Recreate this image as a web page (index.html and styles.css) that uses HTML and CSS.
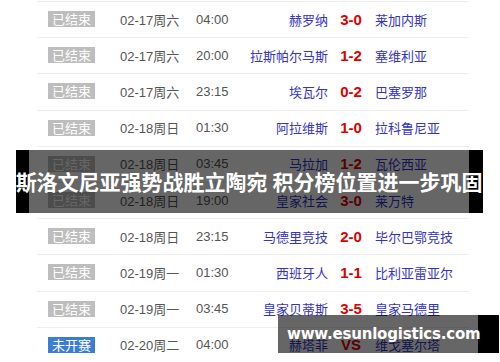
FILE: index.html
```html
<!DOCTYPE html>
<html lang="zh-CN">
<head>
<meta charset="utf-8">
<title>斯洛文尼亚强势战胜立陶宛 积分榜位置进一步巩固</title>
<link rel="stylesheet" href="styles.css">
</head>
<body>
<div class="page">
  <div class="list">
    <div class="row"><span class="badge">已结束</span><span class="date">02-17周六</span><span class="time">04:00</span><span class="home">赫罗纳</span><span class="score">3-0</span><span class="away">莱加内斯</span></div>
    <div class="row"><span class="badge">已结束</span><span class="date">02-17周六</span><span class="time">20:00</span><span class="home">拉斯帕尔马斯</span><span class="score">1-2</span><span class="away">塞维利亚</span></div>
    <div class="row"><span class="badge">已结束</span><span class="date">02-17周六</span><span class="time">23:15</span><span class="home">埃瓦尔</span><span class="score">0-2</span><span class="away">巴塞罗那</span></div>
    <div class="row"><span class="badge">已结束</span><span class="date">02-18周日</span><span class="time">01:30</span><span class="home">阿拉维斯</span><span class="score">1-0</span><span class="away">拉科鲁尼亚</span></div>
    <div class="row"><span class="badge">已结束</span><span class="date">02-18周日</span><span class="time">03:45</span><span class="home">马拉加</span><span class="score">1-2</span><span class="away">瓦伦西亚</span></div>
    <div class="row"><span class="badge">已结束</span><span class="date">02-18周日</span><span class="time">19:00</span><span class="home">皇家社会</span><span class="score">3-0</span><span class="away">莱万特</span></div>
    <div class="row"><span class="badge">已结束</span><span class="date">02-18周日</span><span class="time">23:15</span><span class="home">马德里竞技</span><span class="score">2-0</span><span class="away">毕尔巴鄂竞技</span></div>
    <div class="row"><span class="badge">已结束</span><span class="date">02-19周一</span><span class="time">01:30</span><span class="home">西班牙人</span><span class="score">1-1</span><span class="away">比利亚雷亚尔</span></div>
    <div class="row"><span class="badge">已结束</span><span class="date">02-19周一</span><span class="time">03:45</span><span class="home">皇家贝蒂斯</span><span class="score">3-5</span><span class="away">皇家马德里</span></div>
    <div class="row"><span class="badge badge-blue">未开赛</span><span class="date">02-20周二</span><span class="time">04:00</span><span class="home">赫塔菲</span><span class="score">VS</span><span class="away">维戈塞尔塔</span></div>
  </div>
  <h1 class="title">斯洛文尼亚强势战胜立陶宛 积分榜位置进一步巩固</h1>
  <div class="watermark">www.esunlogistics.com</div>
</div>
</body>
</html>
```
FILE: styles.css
```css
html, body {
  margin: 0;
  padding: 0;
  background: #fff;
}

.page {
  position: relative;
  width: 500px;
  height: 362px;
  overflow: hidden;
  font-family: "Liberation Sans", "Noto Sans CJK SC", sans-serif;
  font-size: 13px;
}

.list {
  margin: 1px 0 0 37px;
  width: 432px;
}

.row {
  display: flex;
  align-items: center;
  height: 36.2px;
  box-sizing: border-box;
  border-top: 1px solid #eeeeee;
  padding-left: 11px;
  padding-bottom: 1px;
  white-space: nowrap;
}

.badge {
  width: 47px;
  height: 16px;
  line-height: 16px;
  text-align: center;
  background: #bdbdbd;
  color: #fff;
  font-size: 13px;
  font-family: "Noto Sans CJK SC", sans-serif;
}

.badge-blue {
  background: #3c7dd4;
}

.date {
  margin-left: 25px;
  width: 76px;
  color: #555;
}

.time {
  width: 44px;
  color: #555;
}

.home {
  width: 88px;
  text-align: right;
  color: #3434c8;
  font-family: "Noto Sans CJK SC", sans-serif;
}

.score {
  width: 46px;
  text-align: center;
  color: #dd0000;
  font-weight: bold;
  font-size: 15px;
}

.away {
  padding-left: 1px;
  color: #3434c8;
  font-family: "Noto Sans CJK SC", sans-serif;
}

.title {
  position: absolute;
  left: 16px;
  top: 150px;
  width: 440px;
  height: 63px;
  margin: 0;
  border-left: 13px solid #000;
  border-right: 14px solid #000;
  background: rgba(0, 0, 0, 0.6);
  color: #fff;
  font-family: "Noto Sans CJK SC", sans-serif;
  font-weight: bold;
  font-size: 21px;
  line-height: 63px;
  text-align: center;
  white-space: nowrap;
  display: flex;
  justify-content: center;
}

.watermark {
  position: absolute;
  left: 278px;
  top: 315px;
  width: 191px;
  height: 38px;
  border-right: 21px solid #000;
  background: rgba(0, 0, 0, 0.6);
  color: #fff;
  font-family: "DejaVu Sans", sans-serif;
  font-weight: bold;
  font-size: 15px;
  letter-spacing: -0.2px;
  line-height: 38px;
  white-space: nowrap;
  padding-left: 9px;
  box-sizing: content-box;
}
```
